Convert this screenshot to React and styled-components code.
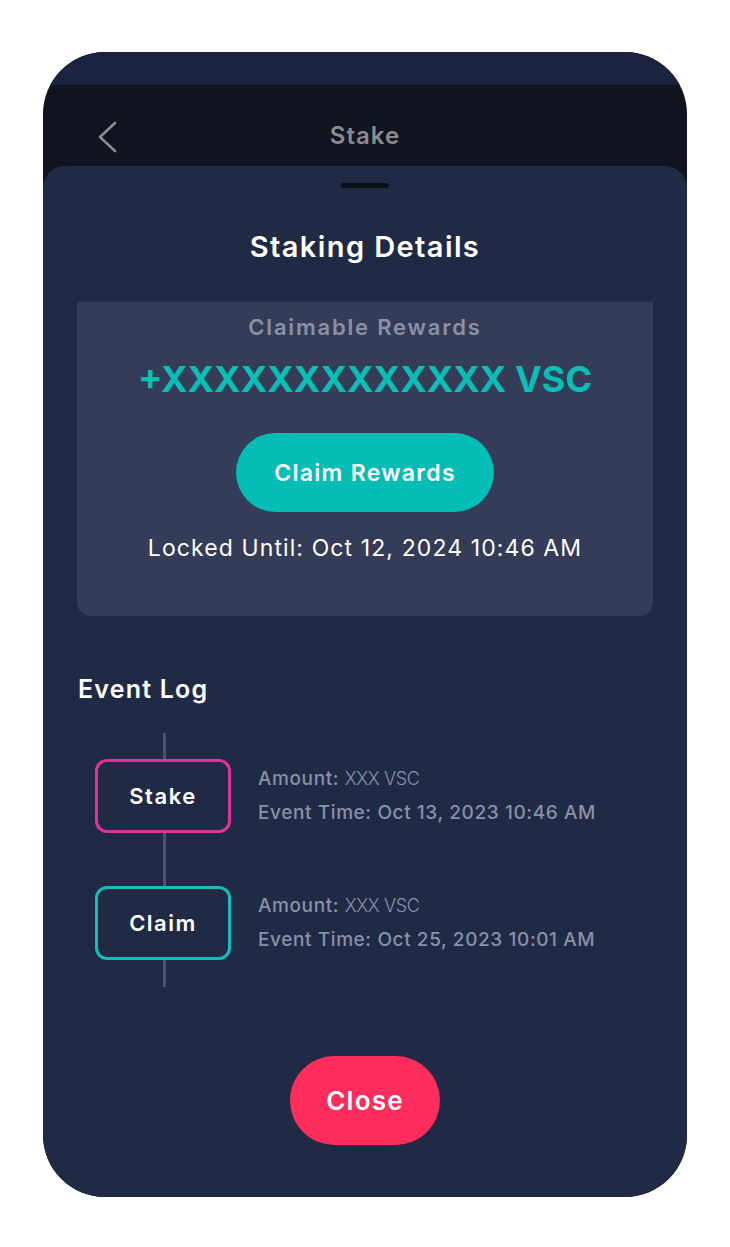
import React from 'react'
import styled, { createGlobalStyle } from 'styled-components'

const Global = createGlobalStyle`
    body {
        margin: 0;
        background: #ffffff;
        font-family: "Inter", "Noto Sans", sans-serif;
    }
`

const Phone = styled.div`
    margin: 52px 0 0 43px;
    width: 644px;
    height: 1145px;
    border-radius: 62px;
    overflow: hidden;
    background: #10141f;
    display: flex;
    flex-direction: column;
`

const TopStrip = styled.div`
    height: 33px;
    background: #1b2340;
`

const Header = styled.div`
    height: 81px;
    display: flex;
    align-items: center;
    justify-content: center;
    position: relative;
`

const Back = styled.svg`
    position: absolute;
    left: 52px;
    top: 36px;
`

const HeaderTitle = styled.div`
    color: #8a8a8f;
    font-size: 24px;
    font-weight: 600;
    letter-spacing: 1px;
    margin-top: 20px;
`

const Sheet = styled.div`
    flex: 1;
    background: #212a45;
    border-radius: 22px 22px 0 0;
    display: flex;
    flex-direction: column;
    align-items: stretch;
`

const Handle = styled.div`
    align-self: center;
    width: 48px;
    height: 5px;
    border-radius: 3px;
    background: #0b0e17;
    margin-top: 17px;
`

const Title = styled.h1`
    margin: 39px 0 0;
    text-align: center;
    color: #ffffff;
    font-size: 29px;
    font-weight: 600;
    letter-spacing: 1.4px;
    line-height: 40px;
`

const Card = styled.div`
    margin: 35px 34px 0;
    background: #343c57;
    border-radius: 0 0 14px 14px;
    height: 314px;
    display: flex;
    flex-direction: column;
    align-items: center;
    padding-top: 11px;
    box-sizing: border-box;
`

const CardLabel = styled.div`
    color: #8a90a8;
    font-size: 22px;
    font-weight: 600;
    letter-spacing: 1.8px;
    line-height: 28px;
`

const Amount = styled.div`
    margin-top: 14px;
    color: #06bfb6;
    font-size: 36px;
    font-weight: 700;
    line-height: 48px;
`

const PillButton = styled.button`
    border: none;
    border-radius: 999px;
    background: ${p => p.$bg};
    color: #ffffff;
    font-family: inherit;
    font-weight: 600;
    font-size: ${p => p.$size}px;
    letter-spacing: ${p => p.$ls}px;
    width: ${p => p.$w}px;
    height: ${p => p.$h}px;
    cursor: pointer;
`

const ButtonSlot = styled.div`
    margin-top: 30px;
`

const Locked = styled.div`
    margin-top: 22px;
    color: #ffffff;
    font-size: 23px;
    font-weight: 400;
    letter-spacing: 1.1px;
    line-height: 28px;
`

const SectionTitle = styled.h2`
    margin: 55px 0 0 35px;
    color: #ffffff;
    font-size: 25px;
    font-weight: 600;
    letter-spacing: 1.2px;
    line-height: 36px;
`

const Timeline = styled.div`
    position: relative;
    margin: 26px 0 0 52px;
    padding: 26px 0 27px;
    display: flex;
    flex-direction: column;
    gap: 53px;

    &::before {
        content: "";
        position: absolute;
        left: 68px;
        top: 0;
        bottom: 0;
        width: 3px;
        background: #4a5270;
    }
`

const EventRow = styled.div`
    display: flex;
    align-items: center;
    gap: 27px;
`

const EventBox = styled.div`
    position: relative;
    z-index: 1;
    width: 136px;
    height: 74px;
    box-sizing: border-box;
    border: 3px solid ${p => p.$color};
    border-radius: 12px;
    background: #212a45;
    display: flex;
    align-items: center;
    justify-content: center;
    color: #ffffff;
    font-size: 22px;
    font-weight: 600;
    letter-spacing: 1.5px;
`

const EventInfo = styled.div`
    display: flex;
    flex-direction: column;
    gap: 6px;
    color: #8a90a8;
    font-size: 19px;
    font-weight: 500;
    letter-spacing: 0.6px;
    line-height: 28px;
`

const Light = styled.span`
    font-weight: 300;
    font-size: 18px;
    letter-spacing: -0.4px;
`

const Footer = styled.div`
    display: flex;
    justify-content: center;
    margin-top: 69px;
`

const events = [
    { type: 'Stake', color: '#e0309a', amount: 'XXX VSC', time: 'Oct 13, 2023 10:46 AM' },
    { type: 'Claim', color: '#14bdb5', amount: 'XXX VSC', time: 'Oct 25, 2023 10:01 AM' },
]

export default function App() {
    return (
        <>
            <Global />
            <Phone>
                <TopStrip />
                <Header>
                    <Back width="24" height="32" viewBox="0 0 24 32">
                        <path d="M20 2 L5 16 L20 30" fill="none" stroke="#8a8a8f" strokeWidth="2.6" strokeLinecap="round" strokeLinejoin="round" />
                    </Back>
                    <HeaderTitle>Stake</HeaderTitle>
                </Header>
                <Sheet>
                    <Handle />
                    <Title>Staking Details</Title>
                    <Card>
                        <CardLabel>Claimable Rewards</CardLabel>
                        <Amount>+XXXXXXXXXXXXX VSC</Amount>
                        <ButtonSlot>
                            <PillButton $bg="#04bdb5" $w={258} $h={79} $size={23} $ls={1.3}>Claim Rewards</PillButton>
                        </ButtonSlot>
                        <Locked>Locked Until: Oct 12, 2024 10:46 AM</Locked>
                    </Card>
                    <SectionTitle>Event Log</SectionTitle>
                    <Timeline>
                        {events.map(e => (
                            <EventRow key={e.type}>
                                <EventBox $color={e.color}>{e.type}</EventBox>
                                <EventInfo>
                                    <div>Amount: <Light>{e.amount}</Light></div>
                                    <div>Event Time: {e.time}</div>
                                </EventInfo>
                            </EventRow>
                        ))}
                    </Timeline>
                    <Footer>
                        <PillButton $bg="#ff2d5c" $w={150} $h={89} $size={26} $ls={1.2}>Close</PillButton>
                    </Footer>
                </Sheet>
            </Phone>
        </>
    )
}
